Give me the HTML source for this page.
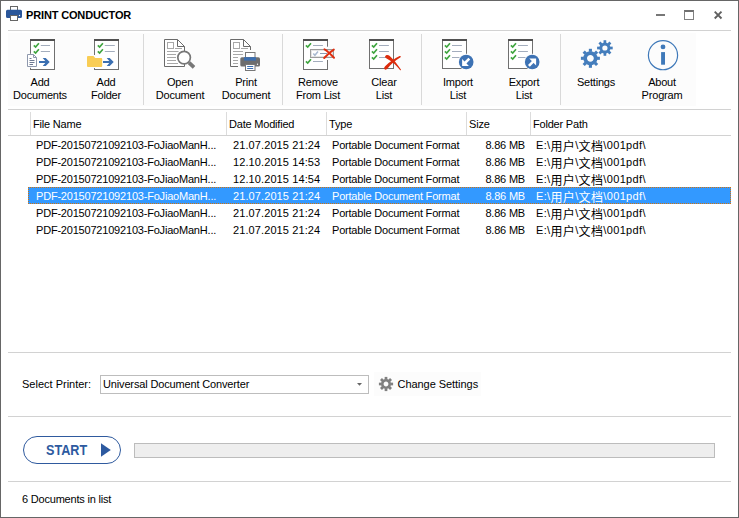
<!DOCTYPE html>
<html lang="en">
<head>
<meta charset="utf-8">
<title>Print Conductor</title>
<style>
*{box-sizing:border-box;margin:0;padding:0}
html,body{width:739px;height:518px;overflow:hidden;background:#fff}
body{font-family:"Liberation Sans","Noto Sans CJK SC",sans-serif;font-size:11px;color:#000;position:relative}
.win{position:absolute;left:0;top:0;width:739px;height:518px;background:#fff;border:1px solid #666}
.abs{position:absolute;white-space:pre}
.hl{position:absolute;left:8px;width:723px;height:1px;background:#d2d2d2}
.title{left:26px;top:8px;font-weight:bold;font-size:11px;line-height:14px;letter-spacing:-0.150px}
.tb{position:absolute;left:8px;top:33px;width:688px;height:73px;background:#fcfcfc}
.sep{position:absolute;top:34px;width:1px;height:71px;background:#d9d9d9}
.btn{position:absolute;top:33px;width:66px;height:73px;text-align:center}
.btn svg{position:absolute;left:17px;top:6px;width:32px;height:32px;overflow:visible}
.btn .lb{position:absolute;left:-10px;width:86px;top:43px;line-height:13px;text-align:center;white-space:pre;letter-spacing:-0.2px}
.hdr{position:absolute;top:110px;height:25px}
.hsep{position:absolute;top:112px;width:1px;height:23px;background:#dcdcdc}
.ht{position:absolute;top:117px;line-height:14px;white-space:pre;letter-spacing:-0.2px}
.row{position:absolute;left:28px;width:703px;height:17px;line-height:17px}
.row span{position:absolute;top:1px;white-space:pre;letter-spacing:-0.2px}
.row i{font-style:normal;font-size:12px;position:relative;top:1.700px}
.row .c1{left:8px}.row .c2{left:205px;letter-spacing:.1px}.row .c3{left:304px}.row .c4{right:206px}.row .c5{left:508px;letter-spacing:.35px}
.row.sel{background:#3399ff;color:#fff;outline:1px dotted #d4720a;outline-offset:-1px}
</style>
</head>
<body>
<div class="win"></div>

<!-- title bar -->
<svg class="abs" style="left:6px;top:6px" width="16" height="15" viewBox="0 0 16 15">
  <rect x="4.5" y="0.5" width="7" height="4" fill="#fff" stroke="#666"/>
  <path d="M1.500 3.700h13a1.500 1.500 0 0 1 1.500 1.500v5.200a1.500 1.500 0 0 1-1.500 1.500h-13a1.500 1.500 0 0 1-1.500-1.500v-5.200a1.500 1.500 0 0 1 1.500-1.500z" fill="#2b579a"/>
  <rect x="4.500" y="9.500" width="7" height="5" fill="#fff" stroke="#666"/>
  <circle cx="13.500" cy="9.500" r="0.700" fill="#fff"/>
</svg>
<div class="abs title">PRINT CONDUCTOR</div>
<!-- window controls -->
<div class="abs" style="left:656px;top:14px;width:9px;height:2px;background:#777"></div>
<div class="abs" style="left:684px;top:10px;width:10px;height:10px;border:1px solid #808080;border-top:2px solid #707070"></div>
<svg class="abs" style="left:714px;top:11px" width="9" height="9" viewBox="0 0 9 9"><path d="M0.700 0.700L7.500 7.500M7.500 0.700L0.700 7.500" stroke="#606060" stroke-width="1.900"/></svg>

<div class="hl" style="top:30px"></div>

<!-- toolbar -->
<div class="tb"></div>
<div class="sep" style="left:143px"></div>
<div class="sep" style="left:282px"></div>
<div class="sep" style="left:421px"></div>
<div class="sep" style="left:560px"></div>

<div class="btn" style="left:7px"><div class="lb">Add
Documents</div></div>
<div class="btn" style="left:73px"><div class="lb">Add
Folder</div></div>
<div class="btn" style="left:147px"><div class="lb">Open
Document</div></div>
<div class="btn" style="left:213px"><div class="lb">Print
Document</div></div>
<div class="btn" style="left:285px"><div class="lb">Remove
From List</div></div>
<div class="btn" style="left:351px"><div class="lb">Clear
List</div></div>
<div class="btn" style="left:425px"><div class="lb">Import
List</div></div>
<div class="btn" style="left:491px"><div class="lb">Export
List</div></div>
<div class="btn" style="left:563px"><div class="lb">Settings</div></div>
<div class="btn" style="left:629px"><div class="lb">About
Program</div></div>

<!-- ICONS-START -->
<svg class="abs" style="left:0;top:0" width="739" height="108" viewBox="0 0 739 108">
<g transform="translate(30,39)"><rect x="0.5" y="0.5" width="24" height="30" fill="#fff" stroke="#707070"/><rect x="0" y="0" width="25" height="2" fill="#505050"/><path d="M3.8 6.4L5.6 8.1L8.9 4.3" fill="none" stroke="#3fa53f" stroke-width="1.650"/><path d="M10.8 6.5h9.2" stroke="#a3adbd" stroke-width="1"/><path d="M3.8 12.4L5.6 14.1L8.9 10.3" fill="none" stroke="#3fa53f" stroke-width="1.650"/><path d="M10.8 12.5h9.2" stroke="#a3adbd" stroke-width="1"/></g><rect x="29" y="53.800" width="3" height="14" fill="#fcfcfc"/><path d="M27.500 54.500h6l3 3v9h-9z" fill="#fff" stroke="#8e98ad"/><path d="M33.500 54.500v3h3" fill="none" stroke="#8e98ad"/><path d="M29.500 58.500h2M29.500 60.500h5M29.500 62.500h5M29.500 64.500h3.500" stroke="#6f7a92" stroke-width="1"/><path d="M39 61h6.3l-2.6-3h3l4 4l-4 4h-3l2.6-3h-6.3z" fill="#3b6fb1"/>
<g transform="translate(94,39)"><rect x="0.5" y="0.5" width="24" height="30" fill="#fff" stroke="#707070"/><rect x="0" y="0" width="25" height="2" fill="#505050"/><path d="M3.8 6.4L5.6 8.1L8.9 4.3" fill="none" stroke="#3fa53f" stroke-width="1.650"/><path d="M10.8 6.5h10" stroke="#a3adbd" stroke-width="1"/><path d="M3.8 12.4L5.6 14.1L8.9 10.3" fill="none" stroke="#3fa53f" stroke-width="1.650"/><path d="M10.8 12.5h10" stroke="#a3adbd" stroke-width="1"/></g><rect x="92" y="55" width="4" height="13" fill="#fcfcfc"/><path d="M87 57a1 1 0 0 1 1-1h5.500l1.700 2h6a1 1 0 0 1 1 1v7a1 1 0 0 1-1 1h-13.200a1 1 0 0 1-1-1z" fill="#f9cd55"/><path d="M103 61h6.3l-2.6-3h3l4 4l-4 4h-3l2.6-3h-6.3z" fill="#3b6fb1"/>
<g transform="translate(164,39)" fill="none"><path d="M0.500 0.500h13l7 7v20h-20z" fill="#fff" stroke="#6a6a6a"/><path d="M13.500 0.500v7h7" stroke="#6a6a6a"/><rect x="3.500" y="3.500" width="6" height="6" stroke="#a8a8a8"/><path d="M11 9.500h7M3 12.500h11.500M3 15.500h9M3 18.500h9M3 21.500h9M3 24.500h11" stroke="#a8a8a8"/></g><path d="M189 62.600l5 4.800" stroke="#777" stroke-width="3.700" fill="none"/><circle cx="184.100" cy="57.600" r="6.300" fill="#fff" stroke="#777" stroke-width="1.700"/>
<g transform="translate(230,39)" fill="none"><path d="M0.500 0.500h13l7 7v20h-20z" fill="#fff" stroke="#6a6a6a"/><path d="M13.500 0.500v7h7" stroke="#6a6a6a"/><rect x="3.500" y="3.500" width="6" height="6" stroke="#a8a8a8"/><path d="M11 9.500h7M3 12.500h10M3 15.500h10M3 18.500h5M3 21.500h5M3 24.500h5" stroke="#a8a8a8"/></g><rect x="238" y="55" width="24" height="17" fill="#fcfcfc"/><rect x="243" y="50" width="14.500" height="6" fill="#fcfcfc"/><rect x="240.300" y="57.200" width="19.700" height="9.300" rx="1.600" fill="#6e6e6e"/><rect x="245.500" y="52.500" width="9.500" height="5" fill="#fff" stroke="#777"/><rect x="244.100" y="57.200" width="11.900" height="3.400" fill="#3b6fb1"/><rect x="245.500" y="64.500" width="9.500" height="6" fill="#fff" stroke="#777"/><path d="M247.200 66.500h6M247.200 68.500h6" stroke="#3b6fb1"/><circle cx="257.500" cy="64.300" r="0.700" fill="#fff"/>
<g transform="translate(303,39)"><rect x="0.5" y="0.5" width="24" height="30" fill="#fff" stroke="#707070"/><rect x="0" y="0" width="25" height="2" fill="#505050"/><rect x="23" y="7.7" width="3" height="13.3" fill="#fcfcfc"/><path d="M2.9 6.4L4.7 8.1L8.0 4.3" fill="none" stroke="#3fa53f" stroke-width="1.650"/><path d="M10 6.5h9.9" stroke="#a3adbd" stroke-width="1"/></g><g transform="translate(303,39)"><path d="M2.900 22.400L4.700 24.100L8 20.300" fill="none" stroke="#3fa53f" stroke-width="1.650"/><path d="M10 22.500h9.900" stroke="#a3adbd"/></g><rect x="310.500" y="49.500" width="23" height="8" fill="#fff" stroke="#9c9c9c"/><rect x="311.500" y="50.500" width="21" height="6" fill="none" stroke="#e4e4e4"/><path d="M313.300 53.600l1.600 1.700l3.100-3.800" fill="none" stroke="#a9b9d0" stroke-width="1.500"/><path d="M320 53.500h7" stroke="#8b9ab2"/><path d="M324.500 49.300C327 50.500 331 54.500 334 57.700M333.800 49.600C330 52 326.500 55.500 324.200 58" fill="none" stroke="#df2f10" stroke-width="2" stroke-linecap="round"/>
<g transform="translate(369,39)"><rect x="0.5" y="0.5" width="24" height="29" fill="#fff" stroke="#707070"/><rect x="0" y="0" width="25" height="2" fill="#505050"/><path d="M2.9 6.4L4.7 8.1L8.0 4.3" fill="none" stroke="#3fa53f" stroke-width="1.650"/><path d="M10 6.5h9.9" stroke="#a3adbd" stroke-width="1"/><path d="M2.9 12.4L4.7 14.1L8.0 10.3" fill="none" stroke="#3fa53f" stroke-width="1.650"/><path d="M10 12.5h9.9" stroke="#a3adbd" stroke-width="1"/><path d="M2.9 18.4L4.7 20.1L8.0 16.3" fill="none" stroke="#3fa53f" stroke-width="1.650"/><path d="M10 18.5h9.9" stroke="#a3adbd" stroke-width="1"/></g><path d="M385.200 56.200C386 54.600 388.200 54.600 389.500 55.800C393.500 59.500 397.500 64.500 400.900 69.400C401.200 70 400.400 70.400 400 69.900C396.500 65.500 392 61 386.200 58.200C385.200 57.700 384.800 57 385.200 56.200z" fill="#dd2c0c"/><path d="M400.600 56.300C401 56.900 400.700 57.300 400.200 57.600C395 60.500 390.500 64.800 387.600 68.600C386.600 69.900 385 70 384.400 69C383.800 68 384.400 66.900 385.400 66C389.500 62 394.500 58.500 399.600 56C400 55.800 400.400 55.900 400.600 56.300z" fill="#dd2c0c"/>
<g transform="translate(442,39)"><rect x="0.5" y="0.5" width="24" height="29" fill="#fff" stroke="#707070"/><rect x="0" y="0" width="25" height="2" fill="#505050"/><path d="M2.9 6.4L4.7 8.1L8.0 4.3" fill="none" stroke="#3fa53f" stroke-width="1.650"/><path d="M10 6.5h9.9" stroke="#a3adbd" stroke-width="1"/><path d="M2.9 12.4L4.7 14.1L8.0 10.3" fill="none" stroke="#3fa53f" stroke-width="1.650"/><path d="M10 12.5h9.9" stroke="#a3adbd" stroke-width="1"/><path d="M2.9 18.4L4.7 20.1L8.0 16.3" fill="none" stroke="#3fa53f" stroke-width="1.650"/><path d="M10 18.5h9.9" stroke="#a3adbd" stroke-width="1"/></g><circle cx="466.200" cy="62" r="8.300" fill="#fcfcfc"/><circle cx="466.200" cy="62" r="7.300" fill="#3d72b4"/><path d="M462.100 59.100v6.800h6.800z" fill="#fff"/><path d="M464.500 63.500l4.800-4.800" stroke="#fff" stroke-width="2.600"/>
<g transform="translate(508,39)"><rect x="0.5" y="0.5" width="24" height="29" fill="#fff" stroke="#707070"/><rect x="0" y="0" width="25" height="2" fill="#505050"/><path d="M2.9 6.4L4.7 8.1L8.0 4.3" fill="none" stroke="#3fa53f" stroke-width="1.650"/><path d="M10 6.5h9.9" stroke="#a3adbd" stroke-width="1"/><path d="M2.9 12.4L4.7 14.1L8.0 10.3" fill="none" stroke="#3fa53f" stroke-width="1.650"/><path d="M10 12.5h9.9" stroke="#a3adbd" stroke-width="1"/><path d="M2.9 18.4L4.7 20.1L8.0 16.3" fill="none" stroke="#3fa53f" stroke-width="1.650"/><path d="M10 18.5h9.9" stroke="#a3adbd" stroke-width="1"/></g><circle cx="532.200" cy="62" r="8.300" fill="#fcfcfc"/><circle cx="532.200" cy="62" r="7.300" fill="#3d72b4"/><path d="M529.300 58.600h6.800v6.800z" fill="#fff"/><path d="M533.800 60.900l-4.900 4.900" stroke="#fff" stroke-width="2.600"/>
<g transform="translate(590.4,58.3)" fill="#447dbc"><circle r="5.25" fill="none" stroke="#447dbc" stroke-width="3.70"/><rect x="-1.55" y="-9.50" width="3.10" height="3.00" transform="rotate(0)"/><rect x="-1.55" y="-9.50" width="3.10" height="3.00" transform="rotate(45)"/><rect x="-1.55" y="-9.50" width="3.10" height="3.00" transform="rotate(90)"/><rect x="-1.55" y="-9.50" width="3.10" height="3.00" transform="rotate(135)"/><rect x="-1.55" y="-9.50" width="3.10" height="3.00" transform="rotate(180)"/><rect x="-1.55" y="-9.50" width="3.10" height="3.00" transform="rotate(225)"/><rect x="-1.55" y="-9.50" width="3.10" height="3.00" transform="rotate(270)"/><rect x="-1.55" y="-9.50" width="3.10" height="3.00" transform="rotate(315)"/></g><g transform="translate(604.9,48.0)" fill="#447dbc"><circle r="4.05" fill="none" stroke="#447dbc" stroke-width="2.90"/><rect x="-1.35" y="-7.80" width="2.70" height="2.90" transform="rotate(0)"/><rect x="-1.35" y="-7.80" width="2.70" height="2.90" transform="rotate(45)"/><rect x="-1.35" y="-7.80" width="2.70" height="2.90" transform="rotate(90)"/><rect x="-1.35" y="-7.80" width="2.70" height="2.90" transform="rotate(135)"/><rect x="-1.35" y="-7.80" width="2.70" height="2.90" transform="rotate(180)"/><rect x="-1.35" y="-7.80" width="2.70" height="2.90" transform="rotate(225)"/><rect x="-1.35" y="-7.80" width="2.70" height="2.90" transform="rotate(270)"/><rect x="-1.35" y="-7.80" width="2.70" height="2.90" transform="rotate(315)"/></g>
<circle cx="663" cy="55.150" r="14.600" fill="none" stroke="#3f79b9" stroke-width="1.200"/><circle cx="663" cy="46.900" r="2.400" fill="#3f79b9"/><rect x="661.100" y="52.100" width="3.900" height="12.600" fill="#3f79b9"/>
</svg>
<!-- ICONS-END -->

<!-- list header -->
<div class="hl" style="top:109px"></div>
<div class="hl" style="top:135px"></div>
<div class="hsep" style="left:30px"></div>
<div class="hsep" style="left:226px"></div>
<div class="hsep" style="left:326px"></div>
<div class="hsep" style="left:466px"></div>
<div class="hsep" style="left:530px"></div>
<div class="ht" style="left:33px">File Name</div>
<div class="ht" style="left:229px">Date Modified</div>
<div class="ht" style="left:329px">Type</div>
<div class="ht" style="left:469px">Size</div>
<div class="ht" style="left:533px">Folder Path</div>

<!-- rows -->
<div class="row" style="top:136px"><span class="c1">PDF-20150721092103-FoJiaoManH...</span><span class="c2">21.07.2015 21:24</span><span class="c3">Portable Document Format</span><span class="c4">8.86 MB</span><span class="c5">E:\<i>用户</i>\<i>文档</i>\001pdf\</span></div>
<div class="row" style="top:153px"><span class="c1">PDF-20150721092103-FoJiaoManH...</span><span class="c2">12.10.2015 14:53</span><span class="c3">Portable Document Format</span><span class="c4">8.86 MB</span><span class="c5">E:\<i>用户</i>\<i>文档</i>\001pdf\</span></div>
<div class="row" style="top:170px"><span class="c1">PDF-20150721092103-FoJiaoManH...</span><span class="c2">12.10.2015 14:54</span><span class="c3">Portable Document Format</span><span class="c4">8.86 MB</span><span class="c5">E:\<i>用户</i>\<i>文档</i>\001pdf\</span></div>
<div class="row sel" style="top:187px"><span class="c1">PDF-20150721092103-FoJiaoManH...</span><span class="c2">21.07.2015 21:24</span><span class="c3">Portable Document Format</span><span class="c4">8.86 MB</span><span class="c5">E:\<i>用户</i>\<i>文档</i>\001pdf\</span></div>
<div class="row" style="top:204px"><span class="c1">PDF-20150721092103-FoJiaoManH...</span><span class="c2">21.07.2015 21:24</span><span class="c3">Portable Document Format</span><span class="c4">8.86 MB</span><span class="c5">E:\<i>用户</i>\<i>文档</i>\001pdf\</span></div>
<div class="row" style="top:221px"><span class="c1">PDF-20150721092103-FoJiaoManH...</span><span class="c2">21.07.2015 21:24</span><span class="c3">Portable Document Format</span><span class="c4">8.86 MB</span><span class="c5">E:\<i>用户</i>\<i>文档</i>\001pdf\</span></div>

<!-- printer panel -->
<div class="hl" style="top:352px"></div>
<div class="abs" style="left:22px;top:377px;line-height:14px;letter-spacing:0">Select Printer:</div>
<div class="abs" style="left:100px;top:375px;width:269px;height:19px;border:1px solid #bdbdbd;background:#fff"></div>
<div class="abs" style="left:103px;top:377px;line-height:14px;letter-spacing:-0.15px">Universal Document Converter</div>
<svg class="abs" style="left:357px;top:383px" width="5" height="3" viewBox="0 0 5 3"><path d="M0 0h5L2.500 2.700z" fill="#666"/></svg>
<div class="abs" style="left:374px;top:372px;width:107px;height:24px;background:#fcfcfc"></div>
<svg class="abs" style="left:378px;top:376px" width="16" height="16" viewBox="-8 -8 16 16"><g fill="#808080"><circle r="3.700" fill="none" stroke="#808080" stroke-width="2.600"/><rect x="-1.350" y="-7.100" width="2.700" height="2.800"/><rect x="-1.350" y="-7.100" width="2.700" height="2.800" transform="rotate(45)"/><rect x="-1.350" y="-7.100" width="2.700" height="2.800" transform="rotate(90)"/><rect x="-1.350" y="-7.100" width="2.700" height="2.800" transform="rotate(135)"/><rect x="-1.350" y="-7.100" width="2.700" height="2.800" transform="rotate(180)"/><rect x="-1.350" y="-7.100" width="2.700" height="2.800" transform="rotate(225)"/><rect x="-1.350" y="-7.100" width="2.700" height="2.800" transform="rotate(270)"/><rect x="-1.350" y="-7.100" width="2.700" height="2.800" transform="rotate(315)"/></g></svg>
<div class="abs" style="left:397.500px;top:377px;line-height:14px;letter-spacing:-0.050px">Change Settings</div>

<div class="hl" style="top:416px"></div>

<!-- start -->
<div class="abs" style="left:23px;top:436px;width:98px;height:28px;border:1px solid #2f5a9e;border-radius:14px;background:#fff"></div>
<div class="abs" style="left:46px;top:442px;font-size:14.500px;line-height:17px;font-weight:bold;color:#2d5aa0;transform-origin:0 50%;transform:scaleX(.87)">START</div>
<svg class="abs" style="left:101px;top:443px" width="10" height="14" viewBox="0 0 10 14"><path d="M0 0.300L9.800 7L0 13.700z" fill="#2d5aa0"/></svg>
<div class="abs" style="left:134px;top:443px;width:581px;height:15px;background:#eee;border:1px solid #bcbcbc"></div>

<div class="hl" style="top:481px"></div>
<div class="abs" style="left:22px;top:492px;line-height:14px;letter-spacing:-0.2px">6 Documents in list</div>
</body>
</html>
